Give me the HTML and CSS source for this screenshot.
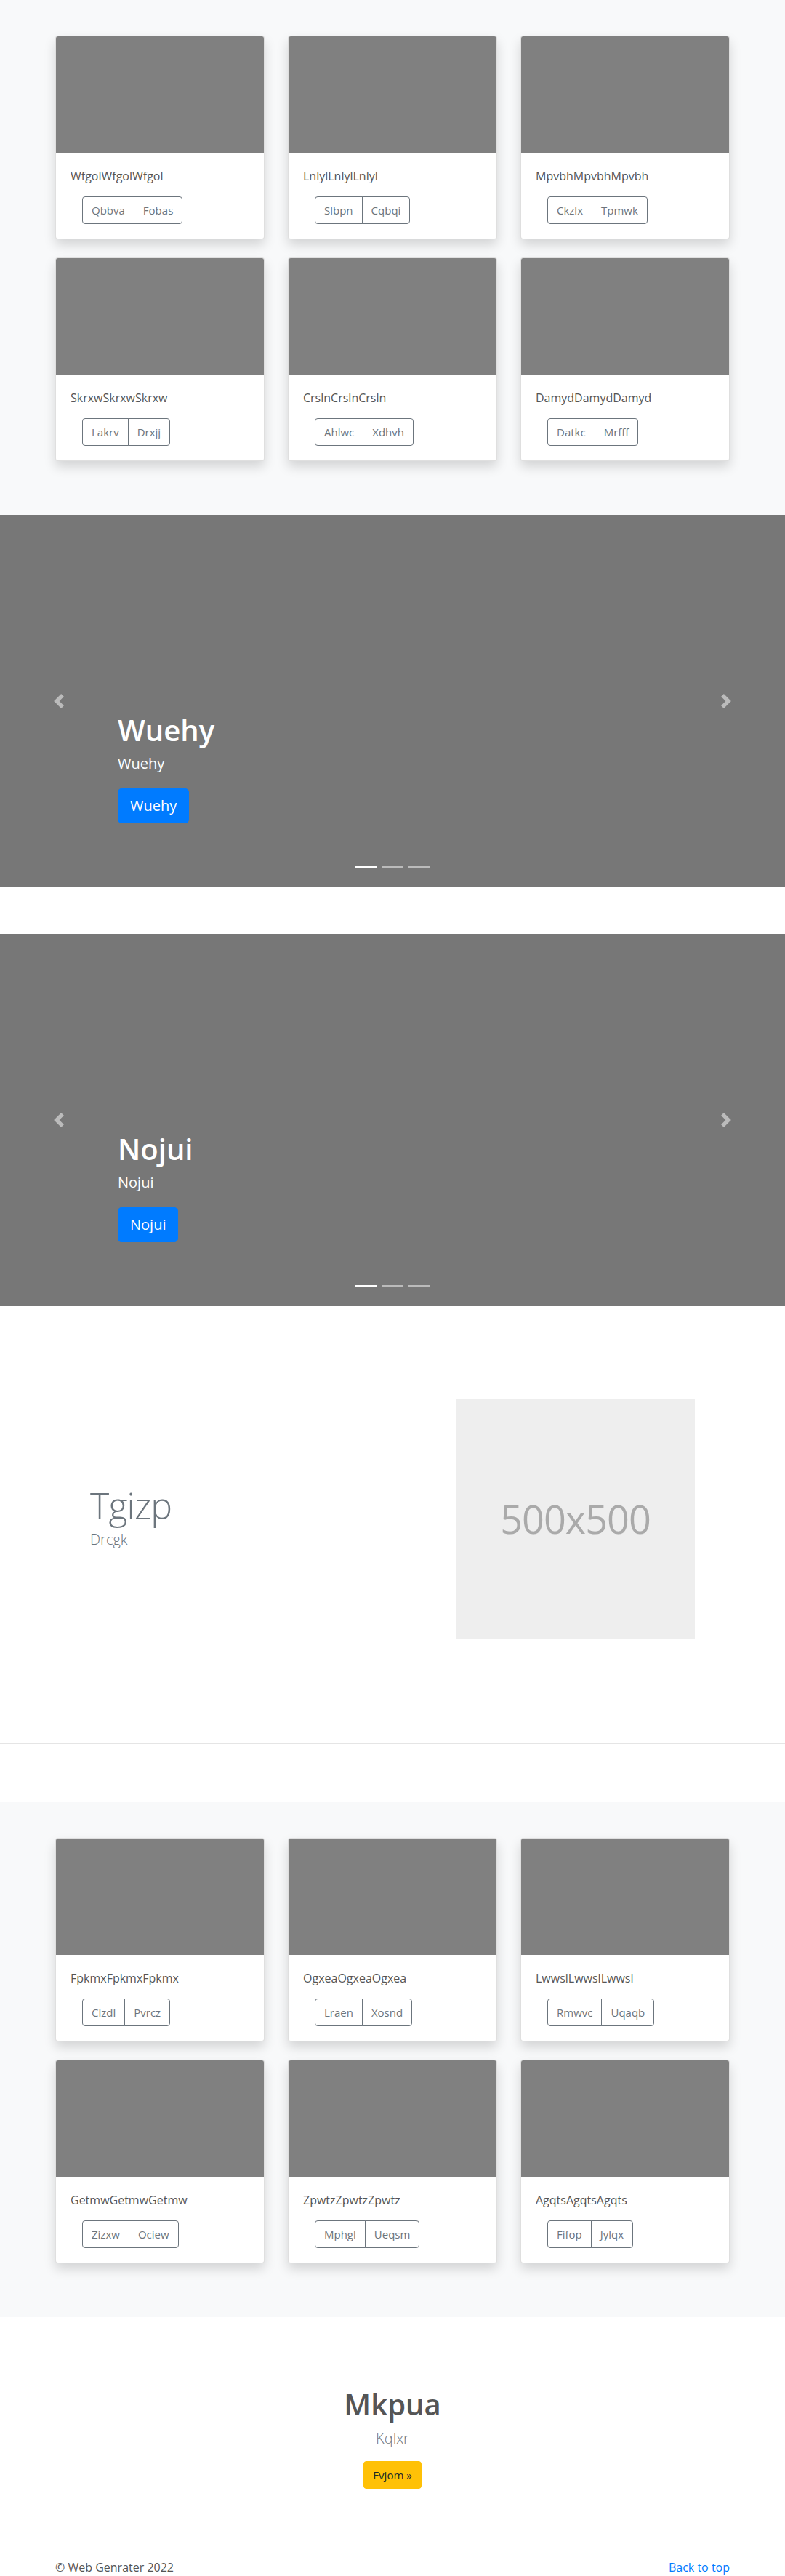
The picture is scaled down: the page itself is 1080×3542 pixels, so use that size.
FILE: index.html
```html
<!DOCTYPE html>
<html lang="en">
<head>
<meta charset="utf-8">
<title>Web Genrater</title>
<link rel="stylesheet" href="styles.css">
</head>
<body>

<section class="album">
  <div class="container card-grid">
    <div class="card"><div class="card-img"></div><div class="card-body"><p class="card-text">WfgolWfgolWfgol</p><div class="btn-group"><button class="btn-outline">Qbbva</button><button class="btn-outline">Fobas</button></div></div></div>
    <div class="card"><div class="card-img"></div><div class="card-body"><p class="card-text">LnlylLnlylLnlyl</p><div class="btn-group"><button class="btn-outline">Slbpn</button><button class="btn-outline">Cqbqi</button></div></div></div>
    <div class="card"><div class="card-img"></div><div class="card-body"><p class="card-text">MpvbhMpvbhMpvbh</p><div class="btn-group"><button class="btn-outline">Ckzlx</button><button class="btn-outline">Tpmwk</button></div></div></div>
    <div class="card"><div class="card-img"></div><div class="card-body"><p class="card-text">SkrxwSkrxwSkrxw</p><div class="btn-group"><button class="btn-outline">Lakrv</button><button class="btn-outline">Drxjj</button></div></div></div>
    <div class="card"><div class="card-img"></div><div class="card-body"><p class="card-text">CrslnCrslnCrsln</p><div class="btn-group"><button class="btn-outline">Ahlwc</button><button class="btn-outline">Xdhvh</button></div></div></div>
    <div class="card"><div class="card-img"></div><div class="card-body"><p class="card-text">DamydDamydDamyd</p><div class="btn-group"><button class="btn-outline">Datkc</button><button class="btn-outline">Mrfff</button></div></div></div>
  </div>
</section>

<section class="carousel">
  <div class="carousel-caption">
    <h1 class="caption-title">Wuehy</h1>
    <p class="caption-text">Wuehy</p>
    <div class="caption-action"><a class="btn-primary" href="#">Wuehy</a></div>
  </div>
  <a class="carousel-control control-prev" href="#"><svg width="20" height="20" viewBox="0 0 8 8"><path fill="#fff" d="M5.25 0l-4 4 4 4 1.5-1.5L4.25 4l2.5-2.5L5.25 0z"/></svg></a>
  <a class="carousel-control control-next" href="#"><svg width="20" height="20" viewBox="0 0 8 8"><path fill="#fff" d="M2.75 0l-1.5 1.5L3.75 4l-2.5 2.5L2.75 8l4-4-4-4z"/></svg></a>
  <ol class="carousel-indicators"><li class="active"></li><li></li><li></li></ol>
</section>

<section class="carousel">
  <div class="carousel-caption">
    <h1 class="caption-title">Nojui</h1>
    <p class="caption-text">Nojui</p>
    <div class="caption-action"><a class="btn-primary" href="#">Nojui</a></div>
  </div>
  <a class="carousel-control control-prev" href="#"><svg width="20" height="20" viewBox="0 0 8 8"><path fill="#fff" d="M5.25 0l-4 4 4 4 1.5-1.5L4.25 4l2.5-2.5L5.25 0z"/></svg></a>
  <a class="carousel-control control-next" href="#"><svg width="20" height="20" viewBox="0 0 8 8"><path fill="#fff" d="M2.75 0l-1.5 1.5L3.75 4l-2.5 2.5L2.75 8l4-4-4-4z"/></svg></a>
  <ol class="carousel-indicators"><li class="active"></li><li></li><li></li></ol>
</section>

<section class="container featurette">
  <div class="featurette-text">
    <h2 class="featurette-heading">Tgizp</h2>
    <p class="featurette-lead">Drcgk</p>
  </div>
  <div class="placeholder-img"><span>500x500</span></div>
</section>

<hr class="divider">

<section class="album">
  <div class="container card-grid">
    <div class="card"><div class="card-img"></div><div class="card-body"><p class="card-text">FpkmxFpkmxFpkmx</p><div class="btn-group"><button class="btn-outline">Clzdl</button><button class="btn-outline">Pvrcz</button></div></div></div>
    <div class="card"><div class="card-img"></div><div class="card-body"><p class="card-text">OgxeaOgxeaOgxea</p><div class="btn-group"><button class="btn-outline">Lraen</button><button class="btn-outline">Xosnd</button></div></div></div>
    <div class="card"><div class="card-img"></div><div class="card-body"><p class="card-text">LwwslLwwslLwwsl</p><div class="btn-group"><button class="btn-outline">Rmwvc</button><button class="btn-outline">Uqaqb</button></div></div></div>
    <div class="card"><div class="card-img"></div><div class="card-body"><p class="card-text">GetmwGetmwGetmw</p><div class="btn-group"><button class="btn-outline">Zizxw</button><button class="btn-outline">Ociew</button></div></div></div>
    <div class="card"><div class="card-img"></div><div class="card-body"><p class="card-text">ZpwtzZpwtzZpwtz</p><div class="btn-group"><button class="btn-outline">Mphgl</button><button class="btn-outline">Ueqsm</button></div></div></div>
    <div class="card"><div class="card-img"></div><div class="card-body"><p class="card-text">AgqtsAgqtsAgqts</p><div class="btn-group"><button class="btn-outline">Fifop</button><button class="btn-outline">Jylqx</button></div></div></div>
  </div>
</section>

<section class="jumbo">
  <h1 class="jumbo-title">Mkpua</h1>
  <p class="jumbo-lead">Kqlxr</p>
  <div class="jumbo-action"><a class="btn-warning" href="#">Fvjom »</a></div>
</section>

<footer class="container footer">
  <p class="footer-copy">© Web Genrater 2022</p>
  <a class="footer-link" href="#">Back to top</a>
</footer>

</body>
</html>
```

FILE: styles.css
```css
* { box-sizing: border-box; }

body {
  margin: 0;
  font-family: "Open Sans", "Noto Sans", "DejaVu Sans", sans-serif;
  font-size: 16px;
  line-height: 1.5;
  color: #212529;
  background: #fff;
}

.container {
  width: 928px;
  margin: 0 auto;
}

/* Album sections */
.album {
  background: #f8f9fa;
  padding: 49px 0 74px;
}

.card-grid {
  display: grid;
  grid-template-columns: repeat(3, 1fr);
  column-gap: 32px;
  row-gap: 25px;
}

.card {
  background: #fff;
  border: 1px solid rgba(0, 0, 0, 0.125);
  border-radius: 4px;
  box-shadow: 0 8px 16px rgba(0, 0, 0, 0.15);
  overflow: hidden;
}

.card-img {
  height: 160px;
  background: #808080;
}

.card-body {
  padding: 20px;
}

.card-text {
  margin: 0 0 16px;
  font-size: 16px;
  line-height: 24px;
  color: #555;
}

.btn-group {
  display: inline-flex;
  margin-left: 16px;
}

.btn-outline {
  font-family: inherit;
  font-size: 15px;
  line-height: 24px;
  padding: 6px 12px;
  color: #6c757d;
  background: transparent;
  border: 1px solid #6c757d;
  border-radius: 0;
  height: 38px;
}

.btn-outline:first-child {
  border-radius: 4px 0 0 4px;
}

.btn-outline:last-child {
  border-radius: 0 4px 4px 0;
  margin-left: -1px;
}

/* Carousels */
.carousel {
  position: relative;
  height: 512px;
  background: #777;
  margin-bottom: 64px;
}

.carousel-caption {
  position: absolute;
  left: 15%;
  right: 15%;
  bottom: 48px;
  padding: 20px 0;
  color: #fff;
  z-index: 10;
}

.caption-title {
  margin: 0 0 8px;
  font-size: 40px;
  font-weight: 600;
  line-height: 48px;
}

.caption-text {
  margin: 0 0 20px;
  font-size: 20px;
  line-height: 28px;
}

.caption-action {
  display: flex;
  margin-bottom: 20px;
}

.btn-primary {
  display: inline-block;
  padding: 8px 16px;
  font-size: 20px;
  line-height: 30px;
  color: #fff;
  background: #007bff;
  border: 1px solid #007bff;
  border-radius: 5px;
  text-decoration: none;
}

.carousel-control {
  position: absolute;
  top: 0;
  bottom: 0;
  width: 15%;
  display: flex;
  align-items: center;
  justify-content: center;
  opacity: 0.5;
}

.control-prev { left: 0; }
.control-next { right: 0; }

.carousel-indicators {
  position: absolute;
  left: 0;
  right: 0;
  bottom: 26px;
  margin: 0;
  padding: 0;
  list-style: none;
  display: flex;
  justify-content: center;
}

.carousel-indicators li {
  width: 30px;
  height: 3px;
  margin: 0 3px;
  background: rgba(255, 255, 255, 0.5);
}

.carousel-indicators li.active {
  background: #fff;
}

/* Featurette */
.featurette {
  display: flex;
  justify-content: space-between;
  align-items: center;
  padding: 64px 48px;
}

.featurette-heading {
  margin: 0 0 7px;
  font-size: 50px;
  font-weight: 300;
  line-height: 1;
  letter-spacing: -0.8px;
  color: #6c757d;
}

.featurette-lead {
  margin: 0;
  font-size: 20px;
  font-weight: 300;
  line-height: 30px;
  color: #6c757d;
}

.placeholder-img {
  width: 329px;
  height: 329px;
  background: #eee;
  color: #aaa;
  display: flex;
  align-items: center;
  justify-content: center;
  font-size: 54px;
  letter-spacing: -1px;
}

.divider {
  margin: 80px 0;
  border: 0;
  border-top: 1px solid rgba(0, 0, 0, 0.1);
}

/* Jumbotron */
.jumbo {
  padding: 96px 0;
  text-align: center;
}

.jumbo-title {
  margin: 0 0 8px;
  font-size: 40px;
  font-weight: 600;
  line-height: 48px;
  color: #555;
}

.jumbo-lead {
  margin: 0 0 16px;
  font-size: 20px;
  font-weight: 300;
  line-height: 30px;
  color: #6c757d;
}

.jumbo-action {
  display: flex;
  justify-content: center;
}

.btn-warning {
  display: inline-block;
  padding: 6px 12px;
  font-size: 15px;
  line-height: 24px;
  color: #212529;
  background: #ffc107;
  border: 1px solid #ffc107;
  border-radius: 4px;
  text-decoration: none;
}

/* Footer */
.footer {
  display: flex;
  justify-content: space-between;
  align-items: flex-start;
}

.footer-copy {
  margin: 0;
  color: #555;
}

.footer-link {
  color: #007bff;
  text-decoration: none;
}
```
